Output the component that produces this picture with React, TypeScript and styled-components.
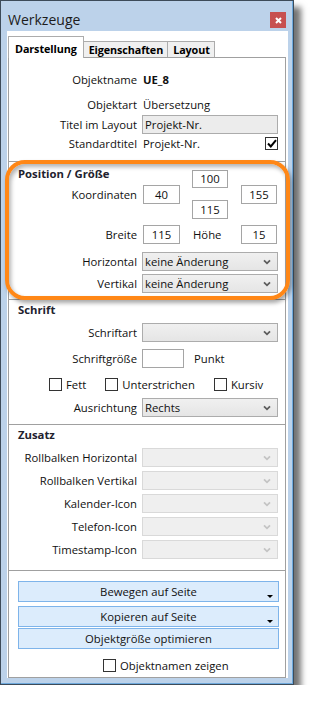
import React from "react";
import styled, { createGlobalStyle } from "styled-components";

const FONT = `"Open Sans", "Liberation Sans", Arial, sans-serif`;

const GlobalStyle = createGlobalStyle`
  html, body { margin: 0; padding: 0; background: #ffffff; }
  body { font-family: ${FONT}; }
  * { box-sizing: border-box; }
`;

const Window = styled.div`
  width: 294px;
  border: 1px solid #3d4b59;
  background: #bcd2ea;
  box-shadow: inset -1px -1px 0 #6ea9dc, 7px 7px 6px rgba(0, 0, 0, 0.55);
  padding: 0 5px 6px 6px;
  font-family: ${FONT};
  font-size: 11.3px;
  color: #101010;
`;

const TitleBar = styled.div`
  height: 30px;
  padding-top: 8px;
  display: flex;
  align-items: center;
  justify-content: space-between;
`;

const Title = styled.div`
  font-size: 14px;
  line-height: 20px;
  padding-left: 1px;
  color: #1c1c1c;
`;

const CloseButton = styled.div`
  width: 16px;
  height: 16px;
  margin-right: 2px;
  background: #c75050;
  display: flex;
  align-items: center;
  justify-content: center;
`;

const Client = styled.div`
  background: #ffffff;
  padding: 5px 2px 0 1px;
`;

const TabStrip = styled.div`
  height: 21px;
  display: flex;
  align-items: flex-end;
  position: relative;
  z-index: 1;
`;

const Tab = styled.div<{ $active?: boolean }>`
  height: ${(p) => (p.$active ? 22 : 16)}px;
  margin-bottom: ${(p) => (p.$active ? -1 : 0)}px;
  padding: ${(p) => (p.$active ? "1px 6px 0 6px" : "0 4px 0 5px")};
  border: 1px solid #acacac;
  border-bottom: none;
  background: ${(p) => (p.$active ? "#ffffff" : "#f0f0f0")};
  font-weight: 700;
  font-size: 10.8px;
  letter-spacing: -0.1px;
  display: flex;
  align-items: center;
  color: #000;
  & + & {
    margin-left: -1px;
  }
`;

const Panel = styled.div`
  border: 1px solid #a0a0a0;
  background: #ffffff;
  display: flex;
  flex-direction: column;
  overflow: visible;
`;

const Section = styled.div<{ $pt: number; $pb: number; $last?: boolean }>`
  position: relative;
  padding: ${(p) => p.$pt}px 0 ${(p) => p.$pb}px;
  border-bottom: ${(p) => (p.$last ? "none" : "1px solid #a0a0a0")};
`;

const Header = styled.div`
  font-weight: 700;
  line-height: 16px;
  padding-left: 9px;
  color: #22222e;
`;

const Row = styled.div<{ $mt?: number; $start?: boolean }>`
  display: grid;
  grid-template-columns: 128px 136px;
  column-gap: 5px;
  align-items: ${(p) => (p.$start ? "start" : "center")};
  min-height: 19px;
  margin-top: ${(p) => p.$mt ?? 0}px;
`;

const Label = styled.div`
  text-align: right;
  white-space: nowrap;
  line-height: 19px;
`;

const Value = styled.div<{ $bold?: boolean }>`
  font-weight: ${(p) => (p.$bold ? 700 : 400)};
  line-height: 19px;
  padding-left: 1px;
  white-space: nowrap;
`;

const ReadOnlyField = styled.div`
  height: 19px;
  border: 1px solid #acacac;
  background: #ececec;
  padding-left: 2px;
  line-height: 17px;
`;

const SplitValue = styled.div`
  display: flex;
  align-items: center;
  justify-content: space-between;
  line-height: 19px;
  padding-left: 1px;
`;

const CheckBox = styled.span`
  width: 13px;
  height: 13px;
  border: 1px solid #333333;
  background: #ffffff;
  display: inline-flex;
  align-items: center;
  justify-content: center;
  flex-shrink: 0;
`;

const LabelStack = styled.div`
  display: flex;
  flex-direction: column;
`;

const StackLabel = styled(Label)`
  margin-top: 3px;
`;

const BoxGrid = styled.div<{ $coords?: boolean }>`
  display: grid;
  grid-template-columns: 37px 12px 36px 13px 36px;
  grid-template-rows: ${(p) => (p.$coords ? "15px 15px 19px" : "19px")};
  margin: ${(p) => (p.$coords ? "4px 0 0 1px" : "0 0 0 1px")};
  align-items: start;
`;

const NumBox = styled.div<{ $col: number; $row?: string; $h?: number }>`
  grid-column: ${(p) => p.$col};
  grid-row: ${(p) => p.$row ?? "auto"};
  height: ${(p) => p.$h ?? 19}px;
  border: 1px solid #a5a5a5;
  background: #ffffff;
  text-align: center;
  line-height: ${(p) => (p.$h ?? 19) - 2}px;
`;

const GridText = styled.div<{ $col: number }>`
  grid-column: ${(p) => p.$col};
  line-height: 19px;
  padding-left: 1px;
  white-space: nowrap;
`;

const SelectBox = styled.div<{ $disabled?: boolean }>`
  height: 19px;
  border: 1px solid ${(p) => (p.$disabled ? "#d9d9d9" : "#acacac")};
  background: ${(p) =>
    p.$disabled ? "#efefef" : "linear-gradient(#f0f0f0, #e5e5e5)"};
  display: flex;
  align-items: center;
  justify-content: space-between;
  padding: 0 6px 0 2px;
  line-height: 17px;
`;

const Inline = styled.div<{ $gap: number }>`
  display: flex;
  align-items: center;
  gap: ${(p) => p.$gap}px;
`;

const SizeBox = styled.div`
  width: 42px;
  height: 19px;
  border: 1px solid #a5a5a5;
  background: #ffffff;
`;

const CheckRow = styled.div<{ $mt: number; $pl: number; $gap: number }>`
  display: flex;
  align-items: center;
  height: 16px;
  margin-top: ${(p) => p.$mt}px;
  padding-left: ${(p) => p.$pl}px;
  gap: ${(p) => p.$gap}px;
`;

const CheckItem = styled.label`
  display: flex;
  align-items: center;
  gap: 4px;
  white-space: nowrap;
`;

const Annotation = styled.div`
  position: absolute;
  top: -2px;
  left: -4px;
  right: -5px;
  bottom: -1px;
  border: 4px solid #ff8716;
  border-radius: 20px;
  box-shadow: 2px 3px 4px rgba(0, 0, 0, 0.35),
    inset 2px 3px 4px rgba(0, 0, 0, 0.3);
  pointer-events: none;
  z-index: 2;
`;

const ButtonArea = styled.div`
  display: flex;
  flex-direction: column;
  padding: 0 6px 0 9px;
`;

const ActionButton = styled.div<{ $mt: number; $drop?: boolean }>`
  position: relative;
  height: 21px;
  margin-top: ${(p) => p.$mt}px;
  border: 1px solid #7eb4ea;
  background: #dcecfc;
  text-align: center;
  line-height: 19px;
  color: #111;
  &::after {
    content: "";
    display: ${(p) => (p.$drop ? "block" : "none")};
    position: absolute;
    right: 5px;
    bottom: 3px;
    border-left: 3px solid transparent;
    border-right: 3px solid transparent;
    border-top: 3px solid #000;
  }
`;

const Chevron = ({ color }: { color: string }) => (
  <svg width="8" height="6" viewBox="0 0 8 6">
    <path d="M1 1.3 L4 4.3 L7 1.3" fill="none" stroke={color} strokeWidth="1.8" />
  </svg>
);

const Select = ({ text, disabled }: { text?: string; disabled?: boolean }) => (
  <SelectBox $disabled={disabled}>
    <span>{text}</span>
    <Chevron color={disabled ? "#c4c4c4" : "#5c5c5c"} />
  </SelectBox>
);

const Check = ({ checked }: { checked?: boolean }) => (
  <CheckBox>
    {checked && (
      <svg width="10" height="9" viewBox="0 0 10 9">
        <path d="M1 4.5 L3.8 7.5 L9 1.2" fill="none" stroke="#000" strokeWidth="2" />
      </svg>
    )}
  </CheckBox>
);

const ZUSATZ = [
  "Rollbalken Horizontal",
  "Rollbalken Vertikal",
  "Kalender-Icon",
  "Telefon-Icon",
  "Timestamp-Icon",
];

export default function App() {
  return (
    <>
      <GlobalStyle />
      <Window>
        <TitleBar>
          <Title>Werkzeuge</Title>
          <CloseButton>
            <svg width="7" height="7" viewBox="0 0 7 7">
              <path d="M1 1 L6 6 M6 1 L1 6" stroke="#fff" strokeWidth="2" />
            </svg>
          </CloseButton>
        </TitleBar>
        <Client>
          <TabStrip>
            <Tab $active>Darstellung</Tab>
            <Tab>Eigenschaften</Tab>
            <Tab>Layout</Tab>
          </TabStrip>
          <Panel>
            <Section $pt={12} $pb={8}>
              <Row>
                <Label>Objektname</Label>
                <Value $bold>UE_8</Value>
              </Row>
              <Row $mt={6}>
                <Label>Objektart</Label>
                <Value>Übersetzung</Value>
              </Row>
              <Row $mt={1}>
                <Label>Titel im Layout</Label>
                <ReadOnlyField>Projekt-Nr.</ReadOnlyField>
              </Row>
              <Row>
                <Label>Standardtitel</Label>
                <SplitValue>
                  <span>Projekt-Nr.</span>
                  <Check checked />
                </SplitValue>
              </Row>
            </Section>

            <Section $pt={4} $pb={6}>
              <Annotation />
              <Row $start>
                <LabelStack>
                  <Header>Position / Größe</Header>
                  <StackLabel>Koordinaten</StackLabel>
                </LabelStack>
                <BoxGrid $coords>
                  <NumBox $col={3} $row="1 / 3" $h={18}>100</NumBox>
                  <NumBox $col={1} $row="2 / 4">40</NumBox>
                  <NumBox $col={5} $row="2 / 4">155</NumBox>
                  <NumBox $col={3} $row="3 / 4">115</NumBox>
                </BoxGrid>
              </Row>
              <Row $mt={6}>
                <Label>Breite</Label>
                <BoxGrid>
                  <NumBox $col={1}>115</NumBox>
                  <GridText $col={3}>Höhe</GridText>
                  <NumBox $col={5}>15</NumBox>
                </BoxGrid>
              </Row>
              <Row $mt={8}>
                <Label>Horizontal</Label>
                <Select text="keine Änderung" />
              </Row>
              <Row $mt={3}>
                <Label>Vertikal</Label>
                <Select text="keine Änderung" />
              </Row>
            </Section>

            <Section $pt={2} $pb={7}>
              <Header>Schrift</Header>
              <Row $mt={5}>
                <Label>Schriftart</Label>
                <Select />
              </Row>
              <Row $mt={7}>
                <Label>Schriftgröße</Label>
                <Inline $gap={10}>
                  <SizeBox />
                  <span>Punkt</span>
                </Inline>
              </Row>
              <CheckRow $mt={8} $pl={40} $gap={19}>
                <CheckItem>
                  <Check />
                  Fett
                </CheckItem>
                <CheckItem>
                  <Check />
                  Unterstrichen
                </CheckItem>
                <CheckItem>
                  <Check />
                  Kursiv
                </CheckItem>
              </CheckRow>
              <Row $mt={6}>
                <Label>Ausrichtung</Label>
                <Select text="Rechts" />
              </Row>
            </Section>

            <Section $pt={2} $pb={11}>
              <Header>Zusatz</Header>
              {ZUSATZ.map((name, i) => (
                <Row key={name} $mt={i === 0 ? 5 : 4}>
                  <Label>{name}</Label>
                  <Select disabled />
                </Row>
              ))}
            </Section>

            <Section $pt={10} $pb={4} $last>
              <ButtonArea>
                <ActionButton $mt={0} $drop>Bewegen auf Seite</ActionButton>
                <ActionButton $mt={4} $drop>Kopieren auf Seite</ActionButton>
                <ActionButton $mt={1}>Objektgröße optimieren</ActionButton>
                <CheckRow $mt={8} $pl={85} $gap={0}>
                  <CheckItem>
                    <Check />
                    Objektnamen zeigen
                  </CheckItem>
                </CheckRow>
              </ButtonArea>
            </Section>
          </Panel>
        </Client>
      </Window>
    </>
  );
}
